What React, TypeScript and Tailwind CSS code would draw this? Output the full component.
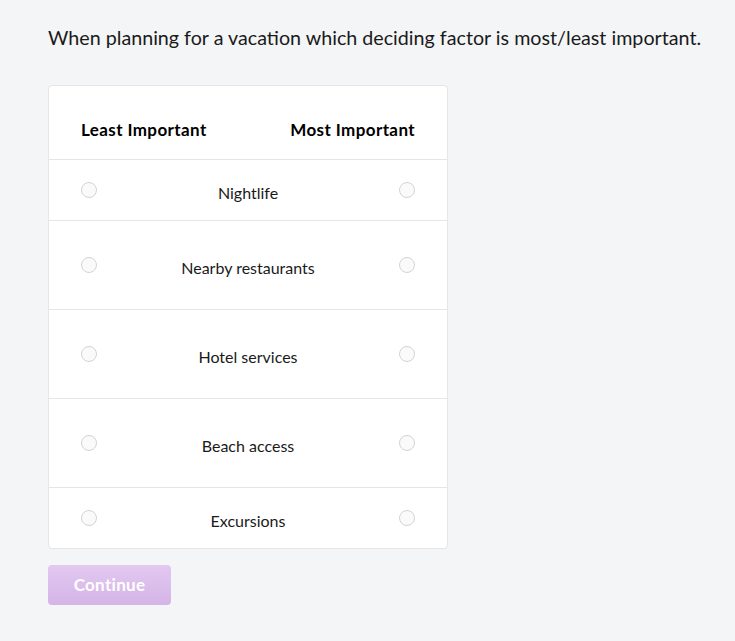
import React from "react";

const items = [
  { label: "Nightlife", h: "h-[61px]" },
  { label: "Nearby restaurants", h: "h-[89px]" },
  { label: "Hotel services", h: "h-[89px]" },
  { label: "Beach access", h: "h-[89px]" },
  { label: "Excursions", h: "h-[60px]" },
];

function Radio() {
  return <div className="w-4 h-4 rounded-full border border-[#d4d4d4] bg-[#fafafa]" />;
}

export default function App() {
  return (
    <div className="min-h-[641px] bg-[#f4f5f7] px-12 pt-[26px] text-[#1a1a1a]" style={{ fontFamily: "Lato, 'Open Sans', sans-serif" }}>
      <h1 className="text-[19.7px] leading-6 font-normal whitespace-nowrap">When planning for a vacation which deciding factor is most/least important.</h1>
      <div className="mt-[35px] w-[400px] bg-white border border-[#e6e6e6] rounded">
        <div className="h-[74px] flex items-end justify-between px-[32px] pb-[17px] border-b border-[#e6e6e6] font-bold text-[17px] tracking-[0.4px] text-black">
          <span>Least Important</span>
          <span>Most Important</span>
        </div>
        {items.map((it, i) => (
          <div key={it.label} className={`${it.h} flex items-center justify-between px-8 pt-[6px] ${i < items.length - 1 ? "border-b border-[#e6e6e6]" : ""}`}>
            <div className="-mt-[6px]"><Radio /></div>
            <span className="text-[16px]">{it.label}</span>
            <div className="-mt-[6px]"><Radio /></div>
          </div>
        ))}
      </div>
      <button className="mt-4 w-[123px] h-10 rounded bg-gradient-to-b from-[#e3c8f1] to-[#d4b4e7] text-white font-bold text-[17px] tracking-[0.3px]">Continue</button>
    </div>
  );
}
